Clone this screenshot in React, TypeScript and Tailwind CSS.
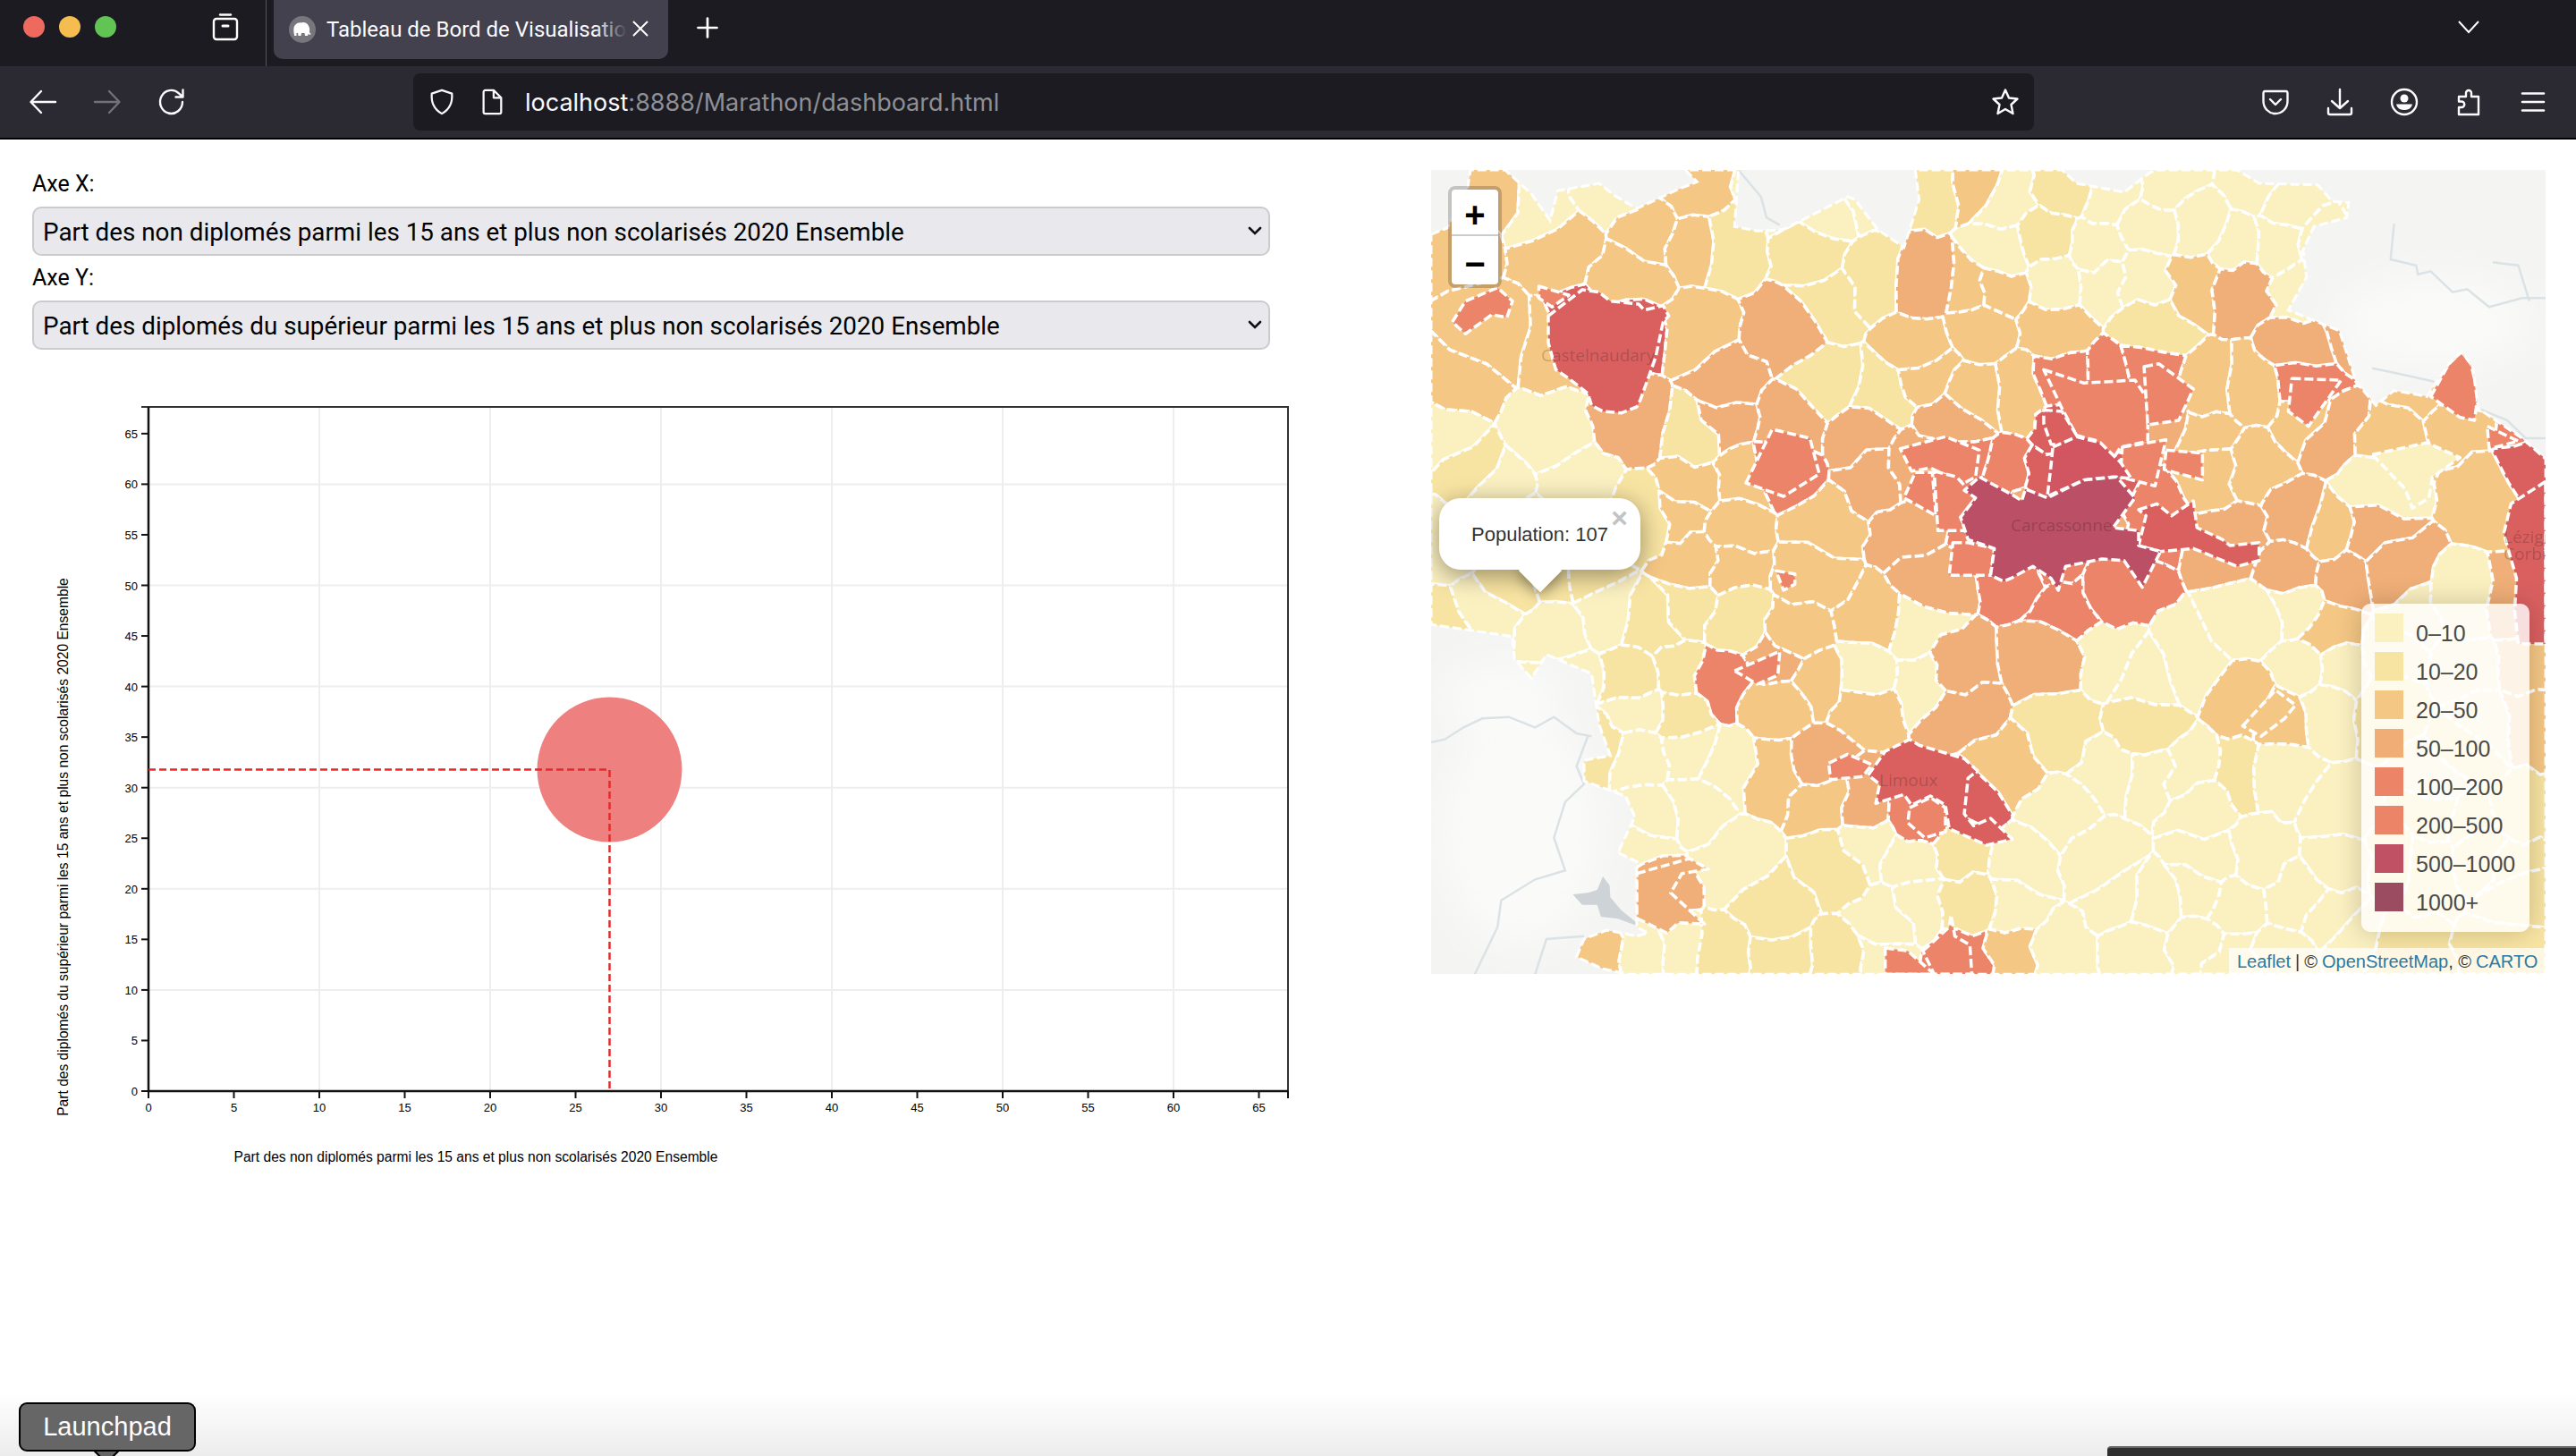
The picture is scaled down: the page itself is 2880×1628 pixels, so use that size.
import React from 'react';
import { X, Plus } from 'lucide-react';

type Pt = [number, number];

const X_TICKS = [0, 5, 10, 15, 20, 25, 30, 35, 40, 45, 50, 55, 60, 65];
const LEGEND = [
  ['0–10', '#fbf0c0'],
  ['10–20', '#f8e4a2'],
  ['20–50', '#f5c785'],
  ['50–100', '#f0ae76'],
  ['100–200', '#ec8468'],
  ['200–500', '#ec8468'],
  ['500–1000', '#c05064'],
  ['1000+', '#9b4c60'],
];

const FILLS: Record<string, string> = {
  '1': '#fbf0c0',
  '2': '#f8e4a2',
  '3': '#f5c785',
  '4': '#f0af78',
  '5': '#ec8469',
  '6': '#da6060',
  '7': '#bb4f66',
};

// colour class of each commune, read off the map on a 24 x 17 grid
const COLOURS = [
  '131133111123121111111111',
  '333133232223121111111111',
  '354633222243311134111111',
  '333663442333332234441111',
  '334444442233355533543333',
  '111442444444565433343335',
  '211123355445566533441436',
  '111223333445444544434336',
  '222223343445555144444346',
  '211122233311555121131114',
  '111222543114441111111113',
  '111112134344422213312113',
  '111211134566321112112122',
  '111111123456111111112222',
  '111111112112111111112222',
  '111141122112111111112222',
  '111311222155313111112222',
];

const z4 = (p: Pt[]): Pt[] => p.map(([x, y]) => [1590 + x / 2.376, 180 + y / 3]);
const z5 = (p: Pt[]): Pt[] => p.map(([x, y]) => [2240 + x / 2.45, 180 + y / 3]);
const z6 = (p: Pt[]): Pt[] => p.map(([x, y]) => [1590 + x / 2.376, 670 + y / 3]);
const z7 = (p: Pt[]): Pt[] => p.map(([x, y]) => [2240 + x / 2.45, 660 + y / 3]);

const toPoints = (p: Pt[]) => p.map(([x, y]) => `${x.toFixed(1)},${y.toFixed(1)}`).join(' ');

const hash = (a: number, b: number) => {
  const s = Math.sin(a * 12.9898 + b * 78.233) * 43758.5453;
  return s - Math.floor(s);
};

function clipHalf(poly: Pt[], a: Pt, b: Pt): Pt[] {
  const mx = (a[0] + b[0]) / 2;
  const my = (a[1] + b[1]) / 2;
  const nx = b[0] - a[0];
  const ny = b[1] - a[1];
  const side = (p: Pt) => (p[0] - mx) * nx + (p[1] - my) * ny;
  const out: Pt[] = [];
  poly.forEach((p, i) => {
    const q = poly[(i + 1) % poly.length];
    const sp = side(p);
    const sq = side(q);
    if (sp <= 0) out.push(p);
    if (sp < 0 !== sq < 0) {
      const t = sp / (sp - sq);
      out.push([p[0] + (q[0] - p[0]) * t, p[1] + (q[1] - p[1]) * t]);
    }
  });
  return out;
}

// break a straight border into a wobbly one, the same way from both of its sides
function wobble(poly: Pt[]): Pt[] {
  const out: Pt[] = [];
  poly.forEach((p, i) => {
    const q = poly[(i + 1) % poly.length];
    out.push(p);
    const ra: Pt = [Math.round(p[0]), Math.round(p[1])];
    const rb: Pt = [Math.round(q[0]), Math.round(q[1])];
    const flip = ra[0] > rb[0] || (ra[0] === rb[0] && ra[1] > rb[1]);
    const [a, b] = flip ? [q, p] : [p, q];
    const [ka, kb] = flip ? [rb, ra] : [ra, rb];
    const len = Math.hypot(b[0] - a[0], b[1] - a[1]);
    if (len < 16) return;
    const steps = len > 40 ? 3 : 2;
    const mids: Pt[] = [];
    for (let s = 1; s < steps; s++) {
      const t = s / steps;
      const off = (hash(ka[0] + s * 3.1 + kb[1], ka[1] + kb[0] * 0.7) - 0.5) * Math.min(len * 0.28, 16);
      mids.push([
        a[0] + (b[0] - a[0]) * t - ((b[1] - a[1]) / len) * off,
        a[1] + (b[1] - a[1]) * t + ((b[0] - a[0]) / len) * off,
      ]);
    }
    out.push(...(flip ? mids.reverse() : mids));
  });
  return out;
}

function buildCells() {
  const seeds: { p: Pt; c: string }[] = [];
  COLOURS.forEach((row, r) => {
    row.split('').forEach((c, col) => {
      // a third of the seeds are left out so the communes differ in size
      if (hash(col * 2.3 + 4, r * 1.7 + 8) < 0.33) return;
      seeds.push({
        p: [
          1600 + (col + 0.5) * 52 + (hash(col + 1, r + 2) - 0.5) * 34,
          190 + (r + 0.5) * 53 + (hash(r + 5, col + 9) - 0.5) * 34,
        ],
        c,
      });
    });
  });
  return seeds.map((s) => {
    let cell: Pt[] = [
      [1590, 180],
      [2856, 180],
      [2856, 1099],
      [1590, 1099],
    ];
    seeds.forEach((o) => {
      if (o !== s && Math.hypot(o.p[0] - s.p[0], o.p[1] - s.p[1]) < 300) cell = clipHalf(cell, s.p, o.p);
    });
    return { points: toPoints(wobble(cell)), fill: FILLS[s.c] };
  });
}

const CELLS = buildCells();

// outline of the shaded communes, the grey base map shows outside of it
const AREA: Pt[] = [
  [1600, 262],
  [1618, 255],
  [1640, 215],
  [1644, 190],
  ...z4([
    [220, 30],
    [290, 110],
    [340, 200],
    [360, 100],
    [470, 75],
    [510, 115],
    [570, 160],
    [680, 95],
    [730, 70],
    [700, 30],
    [840, 30],
    [830, 220],
    [890, 235],
    [960, 230],
    [1130, 120],
    [1150, 130],
    [1210, 230],
    [1280, 290],
    [1320, 130],
    [1310, 30],
  ]),
  ...z5([
    [160, 30],
    [200, 75],
    [330, 105],
    [400, 40],
    [420, 30],
    [640, 30],
    [700, 75],
    [860, 80],
    [900, 135],
    [945, 140],
    [940, 190],
    [850, 220],
    [820, 300],
    [830, 390],
    [780, 500],
    [920, 570],
    [965, 740],
    [1020, 820],
    [1070, 770],
    [1160, 790],
    [1220, 680],
    [1255, 640],
    [1285, 690],
    [1300, 830],
    [1420, 930],
    [1485, 1000],
  ]),
  [2846, 1089],
  ...z6([
    [550, 1258],
    [480, 1240],
    [410, 1200],
    [430, 1140],
    [490, 1110],
    [570, 1130],
    [600, 1120],
    [570, 1100],
    [570, 880],
    [520, 850],
    [565, 730],
    [540, 660],
    [430, 610],
    [430, 540],
    [500, 525],
    [470, 420],
    [450, 250],
    [330, 185],
    [290, 265],
    [245, 200],
    [240, 125],
    [24, 85],
  ]),
];

const SHAPES: { fill: string; pts: Pt[] }[] = [
  { fill: '#f0af78', pts: z6([[570, 920], [710, 870], [760, 905], [690, 920], [660, 985], [750, 1090], [680, 1085], [650, 1120], [570, 1070]]) },
  { fill: '#ec8469', pts: z6([[1230, 1170], [1290, 1180], [1360, 1258], [1230, 1258]]) },
  { fill: '#ec8469', pts: z6([[1330, 1180], [1400, 1100], [1405, 1060], [1415, 1130], [1455, 1160], [1460, 1258], [1360, 1258]]) },
  { fill: '#ec8469', pts: z6([[830, 240], [950, 175], [945, 255], [890, 285]]) },
  { fill: '#f5c785', pts: z7([[655, 455], [745, 335], [800, 385], [770, 430], [705, 490]]) },
  { fill: '#fbf0c0', pts: z5([[1010, 985], [1160, 945], [1250, 995], [1175, 1060], [1165, 1130], [1120, 1165], [1100, 1100]]) },
  { fill: '#ec8469', pts: z5([[1170, 790], [1220, 680], [1255, 640], [1280, 680], [1300, 780], [1290, 870], [1250, 860]]) },
  { fill: '#ec8469', pts: z5([[790, 730], [925, 735], [835, 890], [780, 840]]) },
  { fill: '#ec8469', pts: z5([[1325, 890], [1410, 940], [1330, 965]]) },
  { fill: '#ec8469', pts: z5([[110, 700], [220, 745], [360, 735], [395, 800], [395, 940], [320, 960], [300, 1000], [260, 940], [200, 920], [160, 830]]) },
  { fill: '#ec8469', pts: z5([[325, 960], [445, 935], [430, 1010], [415, 1090], [320, 1060]]) },
  { fill: '#ec8469', pts: z5([[445, 970], [545, 980], [545, 1070], [440, 1035]]) },
  { fill: '#ec8469', pts: z5([[385, 690], [425, 680], [520, 765], [480, 870], [395, 885]]) },
  { fill: '#da6060', pts: z5([[110, 835], [160, 840], [200, 920], [190, 955], [130, 950], [110, 880]]) },
  { fill: '#d25662', pts: z5([[135, 960], [200, 925], [265, 945], [320, 1010], [350, 1065], [300, 1060], [220, 1070], [120, 1125], [130, 1020]]) },
  { fill: '#da6060', pts: z5([[370, 1170], [420, 1150], [460, 1190], [520, 1140], [530, 1230], [600, 1270], [620, 1290], [700, 1280], [700, 1340], [640, 1360], [520, 1300], [430, 1310], [370, 1290], [390, 1190]]) },
  { fill: '#da6060', pts: z5([[1485, 1075], [1390, 1150], [1370, 1250], [1405, 1400], [1400, 1510], [1410, 1620], [1485, 1620]]) },
  { fill: '#ec8469', pts: z4([[80, 540], [115, 470], [200, 425], [240, 470], [225, 525], [185, 515], [115, 580]]) },
  { fill: '#ec8469', pts: z4([[310, 420], [390, 450], [345, 490], [310, 460]]) },
  { fill: '#ec8469', pts: z4([[860, 1080], [930, 900], [1030, 930], [1055, 1050], [960, 1125]]) },
  { fill: '#ec8469', pts: z4([[1270, 965], [1390, 925], [1480, 970], [1470, 1060], [1440, 1080], [1350, 1030], [1300, 1040]]) },
  { fill: '#ec8469', pts: z4([[1310, 1045], [1355, 1045], [1365, 1190], [1280, 1130]]) },
  { fill: '#ec8469', pts: z4([[1360, 1040], [1420, 1060], [1470, 1130], [1430, 1195], [1445, 1240], [1370, 1240]]) },
  { fill: '#ec8469', pts: z4([[1410, 1280], [1450, 1280], [1520, 1300], [1510, 1390], [1400, 1390]]) },
  { fill: '#ec8469', pts: z4([[940, 1375], [990, 1385], [990, 1420], [960, 1440]]) },
  { fill: '#da6060', pts: z4([[335, 520], [425, 432], [470, 440], [500, 470], [575, 480], [590, 500], [640, 485], [655, 520], [640, 540], [620, 660], [580, 800], [570, 825], [530, 845], [480, 840], [450, 820], [440, 780], [390, 730], [355, 700], [335, 610]]) },
  {
    fill: '#bb4f66',
    pts: [
      ...z4([[1480, 1060], [1568, 1120]]),
      ...z5([[50, 1140], [60, 1100], [120, 1130], [220, 1070], [310, 1060], [360, 1130], [300, 1230], [370, 1240], [370, 1290], [430, 1310], [380, 1430], [330, 1340], [270, 1335], [170, 1360], [150, 1440], [130, 1400], [80, 1360], [20, 1400], [0, 1410]]),
      ...z4([[1510, 1390], [1520, 1300], [1450, 1270], [1430, 1195], [1470, 1130], [1440, 1105]]),
    ],
  },
  { fill: '#da6060', pts: z6([[1185, 590], [1230, 510], [1295, 470], [1320, 490], [1440, 535], [1475, 575], [1450, 600], [1440, 720], [1465, 760], [1510, 735], [1568, 805], [1500, 825], [1400, 770], [1390, 690], [1350, 660], [1300, 690], [1280, 655], [1205, 685], [1215, 620]]) },
  { fill: '#ec8469', pts: z6([[1295, 700], [1350, 665], [1390, 700], [1390, 780], [1335, 800], [1290, 750]]) },
  { fill: '#ec8469', pts: z6([[1080, 550], [1130, 520], [1195, 555], [1170, 595], [1085, 605]]) },
];

const RIVERS: Pt[][] = [
  z5([[1070, 210], [1060, 330], [1130, 350], [1135, 380], [1170, 370], [1230, 440], [1270, 430], [1330, 490], [1420, 460], [1485, 460]]),
  z5([[1340, 340], [1410, 350], [1440, 470]]),
  z5([[1010, 695], [1070, 710], [1180, 740]]),
  z5([[1300, 830], [1380, 870], [1430, 930], [1485, 930]]),
  z6([[24, 480], [60, 470], [110, 430], [160, 400], [230, 395], [300, 430], [350, 395], [410, 450], [450, 460]]),
  z6([[440, 460], [410, 560], [430, 620], [380, 680], [350, 800], [380, 910], [300, 940], [210, 1010], [200, 1100], [140, 1258]]),
  z6([[300, 1258], [330, 1140], [430, 1130]]),
  z4([[840, 30], [900, 120], [915, 190], [950, 215]]),
];

const Icon = ({ className, children }: { className: string; children: React.ReactNode }) => (
  <svg className={className} viewBox="0 0 32 32" fill="none" stroke="currentColor" strokeWidth="2.4" strokeLinecap="round" strokeLinejoin="round">
    {children}
  </svg>
);

function TabBar() {
  return (
    <div className="flex h-[74px] items-start bg-[#1c1b22] text-white">
      <div className="flex h-[60px] items-center gap-[16px] pl-[26px]">
        <span className="h-[24px] w-[24px] rounded-full bg-[#ee6a5f]" />
        <span className="h-[24px] w-[24px] rounded-full bg-[#f5bd4f]" />
        <span className="h-[24px] w-[24px] rounded-full bg-[#61c454]" />
      </div>
      <Icon className="ml-[106px] mt-[14px] h-[32px] w-[32px]">
        <path d="M10 2.500h12" />
        <rect x="3" y="7" width="26" height="23" rx="3" />
        <path d="M13 15h6" strokeWidth="3" />
      </Icon>
      <div className="ml-[29px] h-[74px] w-px bg-[#55545c]" />
      <div className="relative ml-[8px] flex h-[66px] w-[441px] items-center rounded-b-[10px] bg-[#42414d] pl-[17px]">
        <span className="relative flex h-[30px] w-[30px] items-center justify-center rounded-full bg-[#77767c]">
          <svg className="h-[22px] w-[22px]" viewBox="0 0 22 22" fill="#fff">
            <path d="M2 17c-1-5-1-9 1-11 2-2.500 5-3 7-2.500 3-1 6 0 7.500 2.500 1.500 2 2 5 1.500 7 0 2 1 3 2 2.500-.5 1.500-2.500 1.500-3.500.5l-.5 2h-3l-.5-3H10l-.5 3h-3l-.5-3-1.500 0 0 3H2z" />
          </svg>
        </span>
        <div className="relative ml-[12px] w-[336px] overflow-hidden whitespace-nowrap font-['Roboto',sans-serif] text-[24px] leading-[30px] text-[#fbfbfe]">
          Tableau de Bord de Visualisation
          <div className="absolute inset-y-0 right-0 w-[36px] bg-gradient-to-r from-transparent to-[#42414d]" />
        </div>
        <X className="absolute left-[395px] top-[17px] h-[30px] w-[30px]" strokeWidth={1.6} />
      </div>
      <Plus className="ml-[26px] mt-[13px] h-[36px] w-[36px]" strokeWidth={1.8} />
      <svg className="absolute left-[2748px] top-[22px] h-[16px] w-[24px]" viewBox="0 0 24 16" fill="none" stroke="#fff" strokeWidth="2">
        <path d="M1 2l11 12L23 2" />
      </svg>
    </div>
  );
}

function Toolbar() {
  return (
    <div className="flex h-[82px] items-start border-b-2 border-black bg-[#2b2a33] text-[#fbfbfe]">
      <div className="flex h-[80px] items-center gap-[40px] pl-[32px]">
        <Icon className="h-[32px] w-[32px]">
          <path d="M30 16H3M14 4L2.500 16 14 28" />
        </Icon>
        <Icon className="h-[32px] w-[32px] text-[#72717a]">
          <path d="M2 16h27M18 4l11.500 12L18 28" />
        </Icon>
        <Icon className="h-[32px] w-[32px]">
          <path d="M28 16a12.500 13 0 1 1-4-9.600L28 10M28.500 2.500v8h-8" />
        </Icon>
      </div>
      <div className="ml-[254px] mt-[8px] flex h-[64px] w-[1812px] items-center rounded-[8px] bg-[#1c1b22]">
        <Icon className="ml-[17px] h-[32px] w-[30px]">
          <path d="M16 2l12 4c1 11-3 19-12 24C7 25 3 17 4 6z" />
        </Icon>
        <Icon className="ml-[26px] h-[32px] w-[30px]">
          <path d="M6 4a2 2 0 0 1 2-2h10l9 9v17a2 2 0 0 1-2 2H8a2 2 0 0 1-2-2zM18 2v9h9" />
        </Icon>
        <span className="ml-[22px] pt-[2px] font-['Inter',sans-serif] text-[27px] leading-[34px]">
          localhost<span className="text-[#8f8f96]">:8888/Marathon/dashboard.html</span>
        </span>
        <Icon className="ml-auto mr-[16px] h-[32px] w-[32px]">
          <path d="M16 2.500l4 9 9.500 1-7 6.500 2 10L16 24l-8.500 5 2-10-7-6.500 9.500-1z" />
        </Icon>
      </div>
      <div className="ml-[254px] flex h-[80px] items-center gap-[40px]">
        <Icon className="h-[32px] w-[32px]">
          <path d="M4 4h24a2 2 0 0 1 1.500 2v9c0 8-6 14-13.500 14S2.500 23 2.500 15V6A2 2 0 0 1 4 4z" />
          <path d="M10 13l6 6 6-6" />
        </Icon>
        <Icon className="h-[32px] w-[32px]">
          <path d="M16 2v21M7 15l9 8 9-8M3 23v5a2 2 0 0 0 2 2h22a2 2 0 0 0 2-2v-5" />
        </Icon>
        <Icon className="h-[32px] w-[32px]">
          <circle cx="16" cy="16" r="14" />
          <circle cx="16" cy="12" r="4.500" fill="currentColor" stroke="none" />
          <path d="M7 18.500h18c-1 4.500-4.500 6.500-9 6.500s-8-2-9-6.500z" fill="currentColor" stroke="none" />
        </Icon>
        <Icon className="h-[32px] w-[32px]">
          <path d="M5 10h8V6a3 3 0 0 1 6 0v4h8v20H5v-8h3a3 3 0 0 0 0-6.500H5z" />
        </Icon>
        <svg className="h-[32px] w-[32px]" viewBox="0 0 32 32" stroke="currentColor" strokeWidth="2.600" strokeLinecap="round">
          <path d="M4 6.500h24M4 16h24M4 25.500h24" />
        </svg>
      </div>
    </div>
  );
}

function AxisSelect({ label, value }: { label: string; value: string }) {
  return (
    <div className="w-[1384px] font-['Roboto',sans-serif] text-black">
      <label className="block h-[30px] pt-[1px] text-[25px] leading-[30px]">{label}</label>
      <div className="relative mt-[11px]">
        <select
          defaultValue={value}
          className="block h-[55px] w-full appearance-none rounded-[10px] border-2 border-[#cbcbce] bg-[#e9e9ed] pl-[10px] pt-[2px] font-['Roboto',sans-serif] text-[27.800px] text-black"
        >
          <option>{value}</option>
        </select>
        <svg className="pointer-events-none absolute right-[9px] top-[21px] h-[12px] w-[16px]" viewBox="0 0 16 12" fill="none" stroke="#111" strokeWidth="2.600" strokeLinecap="round">
          <path d="M2 3l6 6 6-6" />
        </svg>
      </div>
    </div>
  );
}

function ScatterChart() {
  const x0 = 166;
  const y0 = 1219;
  const sx = 19.1;
  const sy = 11.31;
  const right = 1440;
  const top = 454;
  return (
    <svg className="mt-[50px] block h-[880px] w-[1500px]" viewBox="0 440 1500 880" fontFamily="'Liberation Sans', Arial, sans-serif">
      {[10, 20, 30, 40, 50, 60].map((t) => (
        <g key={t} stroke="#eeeeee" strokeWidth="2">
          <line x1={x0 + t * sx} x2={x0 + t * sx} y1={top} y2={y0} />
          <line x1={x0} x2={right} y1={y0 - t * sy} y2={y0 - t * sy} />
        </g>
      ))}
      <path d={`M158 ${top}H${right}V${y0}`} fill="none" stroke="#333" strokeWidth="2" />
      <path d={`M${x0} ${top}V${y0}H${right}`} fill="none" stroke="#111" strokeWidth="2.500" />
      <line x1={right} x2={right} y1={y0} y2={y0 + 8} stroke="#111" strokeWidth="2" />
      {X_TICKS.map((t) => (
        <g key={t}>
          <line x1={x0 + t * sx} x2={x0 + t * sx} y1={y0} y2={y0 + 8} stroke="#111" strokeWidth="2" />
          <text x={x0 + t * sx} y={y0 + 23} textAnchor="middle" fontSize="13" fill="#000">
            {t}
          </text>
          <line x1={x0 - 8} x2={x0} y1={y0 - t * sy} y2={y0 - t * sy} stroke="#111" strokeWidth="2" />
          <text x={x0 - 12} y={y0 - t * sy + 5} textAnchor="end" fontSize="13" fill="#000">
            {t}
          </text>
        </g>
      ))}
      <circle cx="681.500" cy="859.500" r="81" fill="#ef8080" />
      <path d={`M${x0} 859.500H681.500V${y0}`} fill="none" stroke="#e32b2b" strokeWidth="2.500" strokeDasharray="8 4" />
      <text x="532" y="1298" textAnchor="middle" fontSize="15.600" fill="#000">
        Part des non diplomés parmi les 15 ans et plus non scolarisés 2020 Ensemble
      </text>
      <text transform="translate(76 946) rotate(-90)" textAnchor="middle" fontSize="15.600" fill="#000">
        Part des diplomés du supérieur parmi les 15 ans et plus non scolarisés 2020 Ensemble
      </text>
    </svg>
  );
}

function MapPanel() {
  return (
    <div className="relative h-[899px] w-[1246px] overflow-hidden bg-[#f4f5f3] font-['Liberation_Sans',Arial,sans-serif]">
      <svg className="block h-full w-full" viewBox="1600 190 1246 899">
        <defs>
          <clipPath id="communes">
            <polygon points={toPoints(AREA)} />
          </clipPath>
          <filter id="soft">
            <feGaussianBlur stdDeviation="22" />
          </filter>
        </defs>
        <rect x="1600" y="190" width="1246" height="899" fill="#f4f5f3" />
        <g fill="#fafbf9" filter="url(#soft)">
          <ellipse cx="2720" cy="360" rx="110" ry="50" />
          <ellipse cx="2600" cy="440" rx="60" ry="30" />
          <ellipse cx="1700" cy="930" rx="90" ry="130" />
          <ellipse cx="1680" cy="780" rx="70" ry="40" />
        </g>
        {RIVERS.map((r, i) => (
          <polyline key={i} points={toPoints(r)} fill="none" stroke="#dbe2e5" strokeWidth="2.500" />
        ))}
        <polygon
          points={toPoints(z6([[400, 990], [440, 985], [465, 975], [480, 930], [498, 960], [500, 1000], [530, 1045], [570, 1085], [570, 1095], [520, 1072], [475, 1065], [465, 1025], [425, 1025]]))}
          fill="#cdd3d7"
        />
        <g clipPath="url(#communes)" stroke="#fff" strokeWidth="3.500" strokeDasharray="10 4" strokeLinejoin="round">
          {CELLS.map((c, i) => (
            <polygon key={i} points={c.points} fill={c.fill} />
          ))}
          {SHAPES.map((s, i) => (
            <polygon key={i} points={toPoints(s.pts)} fill={s.fill} />
          ))}
        </g>
        <polygon points={toPoints(AREA)} fill="none" stroke="#fff" strokeWidth="3" strokeDasharray="10 4" />
        <g fontFamily="'Open Sans', sans-serif" fontSize="19" fill="#000" fillOpacity="0.2">
          <text x="1723" y="404">Castelnaudary</text>
          <text x="2248" y="594">Carcassonne</text>
          <text x="2101" y="879">Limoux</text>
          <text x="2799" y="607">Lézignan-</text>
          <text x="2799" y="626">Corbières</text>
        </g>
      </svg>

      <div className="absolute left-[19px] top-[18px] flex w-[60px] flex-col overflow-hidden rounded-[8px] border-4 border-black/20 bg-clip-padding">
        <button className="flex h-[52px] items-center justify-center rounded-t-[4px] border-b-2 border-[#ccc] bg-white pt-[6px] text-[40px] font-bold leading-none text-black">
          +
        </button>
        <button className="flex h-[54px] items-center justify-center rounded-b-[4px] bg-white pt-[8px] text-[40px] font-bold leading-none text-black">
          −
        </button>
      </div>

      <div className="absolute left-[9px] top-[367px] h-[105px] w-[225px]">
        <div className="absolute left-[96px] top-[64px] h-[34px] w-[34px] rotate-45 shadow-[3px_3px_16px_rgba(0,0,0,0.4)]" />
        <div className="relative flex h-[80px] w-[225px] items-center rounded-[24px] bg-white pl-[36px] text-[22px] text-[#333] shadow-[0_6px_28px_rgba(0,0,0,0.4)]">
          Population: 107
          <span className="absolute right-[14px] top-[2px] text-[32px] font-bold leading-[40px] text-[#c3c3c3]">×</span>
        </div>
        <div className="absolute left-[96px] top-[64px] h-[34px] w-[34px] rotate-45 bg-white" />
      </div>

      <div className="absolute left-[1040px] top-[485px] h-[367px] w-[188px] rounded-[10px] bg-white/80 pl-[15px] pt-[11px] shadow-[0_0_30px_rgba(0,0,0,0.2)]">
        {LEGEND.map(([label, colour]) => (
          <div key={label} className="flex h-[43px] items-start">
            <span className="h-[32px] w-[32px]" style={{ backgroundColor: colour }} />
            <span className="ml-[14px] pt-[6px] text-[25px] leading-[32px] text-[#4a4a48]">{label}</span>
          </div>
        ))}
      </div>

      <div className="absolute bottom-0 right-0 flex h-[29px] w-[354px] items-center whitespace-nowrap bg-white/70 pl-[9px] text-[20px] text-[#333]">
        <span className="text-[#2a7aa5]">Leaflet</span>
        <span className="ml-[5px]">|</span>
        <span className="ml-[5px]">©</span>
        <span className="ml-[5px] text-[#2a7aa5]">OpenStreetMap</span>
        <span>, ©</span>
        <span className="ml-[5px] text-[#2a7aa5]">CARTO</span>
      </div>
    </div>
  );
}

export default function App() {
  return (
    <div className="relative h-[1628px] w-[2880px] overflow-hidden bg-white">
      <TabBar />
      <Toolbar />
      <div className="flex items-start">
        <div className="w-[1600px] pt-[34px]">
          <div className="flex flex-col gap-[9px] pl-[36px]">
            <AxisSelect label="Axe X:" value="Part des non diplomés parmi les 15 ans et plus non scolarisés 2020 Ensemble" />
            <AxisSelect label="Axe Y:" value="Part des diplomés du supérieur parmi les 15 ans et plus non scolarisés 2020 Ensemble" />
          </div>
          <ScatterChart />
        </div>
        <div className="pt-[34px]">
          <MapPanel />
        </div>
      </div>

      <div className="absolute inset-x-0 bottom-0 h-[70px] bg-gradient-to-b from-transparent to-[#ececec]" />
      <div className="absolute bottom-0 left-[2356px] right-0 h-[11px] rounded-tl-[4px] border-t-2 border-[#666] bg-[#2f2f2f]" />
      <div className="absolute left-[21px] top-[1568px]">
        <div className="absolute left-[88px] top-[45px] h-[20px] w-[20px] rotate-45 border-b-2 border-r-2 border-black bg-[#666]" />
        <div className="relative flex h-[55px] w-[198px] items-center justify-center rounded-[9px] border-2 border-black bg-[#666] font-['Liberation_Sans',Arial,sans-serif] text-[29px] text-white">
          Launchpad
        </div>
      </div>
    </div>
  );
}
